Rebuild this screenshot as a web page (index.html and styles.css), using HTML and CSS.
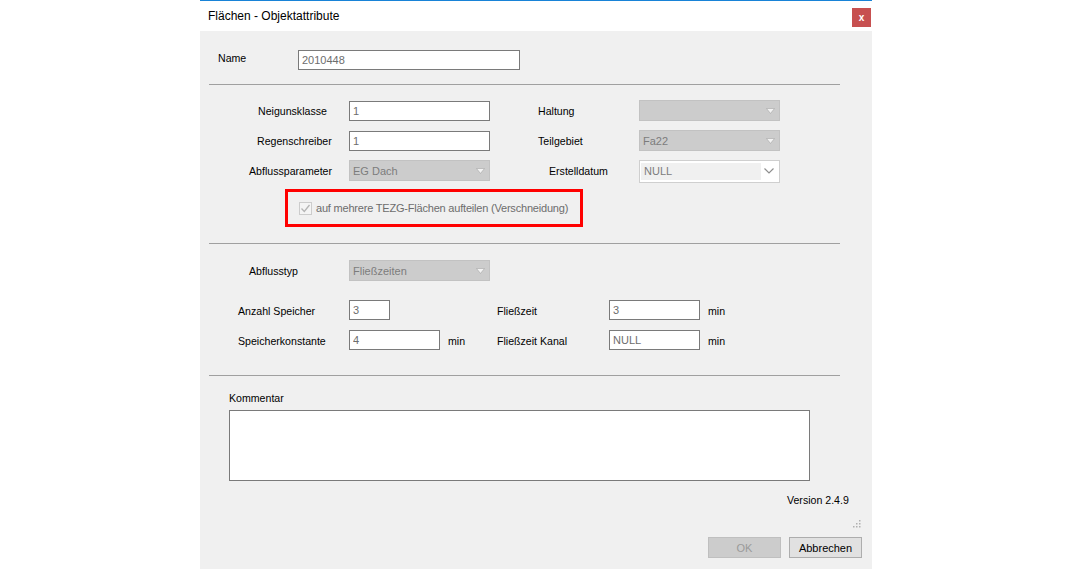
FILE: index.html
```html
<!DOCTYPE html>
<html lang="de">
<head>
<meta charset="utf-8">
<title>Flächen - Objektattribute</title>
<link rel="stylesheet" href="styles.css">
</head>
<body>
<div class="dialog">
  <div class="titlebar">
    <span class="title">Flächen - Objektattribute</span>
    <button class="close" type="button">x</button>
  </div>
  <div class="content">
    <div class="row row-name">
      <span class="lbl lbl-name">Name</span>
      <input class="field w222" type="text" value="2010448" readonly>
    </div>
    <div class="sep sep1"></div>

    <div class="row row-a1">
      <span class="lbl c1" style="padding-left:58px">Neigunsklasse</span>
      <input class="field w141" type="text" value="1" readonly>
      <span class="lbl c3" style="padding-left:48px">Haltung</span>
      <div class="combo w141"><span class="ctext"></span><svg class="carrow" width="9" height="6" viewBox="0 0 9 6"><path d="M0.5 0.5 L8.5 0.5 L4.5 5.5 Z"/></svg></div>
    </div>
    <div class="row row-a2">
      <span class="lbl c1" style="padding-left:57px">Regenschreiber</span>
      <input class="field w141" type="text" value="1" readonly>
      <span class="lbl c3" style="padding-left:48px">Teilgebiet</span>
      <div class="combo w141"><span class="ctext">Fa22</span><svg class="carrow" width="9" height="6" viewBox="0 0 9 6"><path d="M0.5 0.5 L8.5 0.5 L4.5 5.5 Z"/></svg></div>
    </div>
    <div class="row row-a3">
      <span class="lbl c1" style="padding-left:49px">Abflussparameter</span>
      <div class="combo w141"><span class="ctext">EG Dach</span><svg class="carrow" width="9" height="6" viewBox="0 0 9 6"><path d="M0.5 0.5 L8.5 0.5 L4.5 5.5 Z"/></svg></div>
      <span class="lbl c3" style="padding-left:59px">Erstelldatum</span>
      <div class="datepick">
        <span class="dtext">NULL</span>
        <svg class="chev" width="10" height="6" viewBox="0 0 10 6"><path d="M0.5 0.5 L5 5 L9.5 0.5" fill="none" stroke="#8f8f8f" stroke-width="1.2"/></svg>
      </div>
    </div>

    <div class="redbox">
      <span class="chk"><svg width="11" height="11" viewBox="0 0 11 11"><path d="M1.5 5.5 L4.3 8.5 L9.5 2" fill="none" stroke="#b4b4b4" stroke-width="1.3"/></svg></span>
      <span class="chklbl">auf mehrere TEZG-Flächen aufteilen (Verschneidung)</span>
    </div>
    <div class="sep sep2"></div>

    <div class="row row-b1">
      <span class="lbl c1" style="padding-left:49px">Abflusstyp</span>
      <div class="combo w141"><span class="ctext">Fließzeiten</span><svg class="carrow" width="9" height="6" viewBox="0 0 9 6"><path d="M0.5 0.5 L8.5 0.5 L4.5 5.5 Z"/></svg></div>
    </div>
    <div class="row row-b2">
      <span class="lbl c1" style="padding-left:38px">Anzahl Speicher</span>
      <input class="field w41" type="text" value="3" readonly>
      <span class="gap2"></span>
      <span class="lbl c5">Fließzeit</span>
      <input class="field w91" type="text" value="3" readonly>
      <span class="unit">min</span>
    </div>
    <div class="row row-b3">
      <span class="lbl c1" style="padding-left:38px">Speicherkonstante</span>
      <input class="field w91" type="text" value="4" readonly>
      <span class="unit u1">min</span>
      <span class="lbl c5">Fließzeit Kanal</span>
      <input class="field w91" type="text" value="NULL" readonly>
      <span class="unit">min</span>
    </div>
    <div class="sep sep3"></div>

    <div class="komm-lbl">Kommentar</div>
    <textarea class="komm"></textarea>

    <div class="version">Version 2.4.9</div>
    <div class="griprow">
      <svg class="grip" width="9" height="8" viewBox="0 0 9 8">
        <rect x="7" y="0" width="1.5" height="1.5" fill="#b0b0b0"/>
        <rect x="4" y="3" width="1.5" height="1.5" fill="#b0b0b0"/>
        <rect x="7" y="3" width="1.5" height="1.5" fill="#b0b0b0"/>
        <rect x="1" y="6" width="1.5" height="1.5" fill="#b0b0b0"/>
        <rect x="4" y="6" width="1.5" height="1.5" fill="#b0b0b0"/>
        <rect x="7" y="6" width="1.5" height="1.5" fill="#b0b0b0"/>
      </svg>
    </div>
    <div class="buttons">
      <button class="btn btn-ok" type="button" disabled>OK</button>
      <button class="btn btn-cancel" type="button">Abbrechen</button>
    </div>
  </div>
</div>
</body>
</html>
```

FILE: styles.css
```css
* { box-sizing: border-box; }
html, body { margin: 0; padding: 0; background: #ffffff; }
body {
  font-family: "Liberation Sans", Arial, sans-serif;
  font-size: 11px;
  color: #000;
  width: 1072px;
  height: 569px;
  overflow: hidden;
}
.dialog {
  width: 672px;
  height: 569px;
  margin-left: 200px;
  background: #f0f0f0;
  display: flex;
  flex-direction: column;
}
.titlebar {
  height: 31px;
  border-top: 1px solid #1883d7;
  background: #ffffff;
  display: flex;
  align-items: flex-start;
  padding-left: 8px;
}
.title {
  font-size: 12px;
  line-height: 14px;
  margin-top: 8px;
  color: #000;
}
.close {
  margin-left: auto;
  margin-top: 7px;
  margin-right: 1px;
  width: 19px;
  height: 19px;
  border: 0;
  padding: 0;
  background: #c75050;
  color: #fff;
  font-family: "Liberation Sans", Arial, sans-serif;
  font-weight: bold;
  font-size: 10px;
  line-height: 17px;
  text-align: center;
}
.content {
  display: flex;
  flex-direction: column;
  flex: 1;
}
.row {
  display: flex;
  align-items: center;
  height: 21px;
}
.lbl {
  display: block;
  white-space: nowrap;
  line-height: 13px;
  font-size: 10.6px;
  padding-top: 2px;
}
.c1 { width: 149px; }
.c3 { width: 149px; }
.row-name { margin-top: 19px; height: 20px; }
.lbl-name { width: 98px; padding-left: 18px; padding-top: 0; padding-bottom: 4px; }

.field {
  height: 20px;
  border: 1px solid #7a7a7a;
  background: #fff;
  color: #6d6d6d;
  font-family: "Liberation Sans", Arial, sans-serif;
  font-size: 11px;
  padding: 0 0 0 3px;
  margin: 0;
  outline: none;
}
.w222 { width: 222px; }
.w141 { width: 141px; }
.w41 { width: 41px; }
.w91 { width: 91px; }

.sep {
  margin-left: 9px;
  width: 631px;
  height: 1px;
  background: #a0a0a0;
}
.sep1 { margin-top: 14px; }
.row-a1 { margin-top: 15px; }
.row-a2 { margin-top: 9px; }
.row-a3 { margin-top: 9px; }

.combo {
  height: 21px;
  background: #cccccc;
  border: 1px solid #c2c2c2;
  display: flex;
  align-items: center;
  padding: 0 4px 0 3px;
}
.ctext {
  flex: 1;
  color: #7c7c7c;
  font-size: 11px;
}
.carrow path { fill: #f3f3f3; stroke: #a5a5a5; stroke-width: 0.6; }

.datepick {
  width: 141px;
  height: 23px;
  margin-top: 1px;
  border: 1px solid #cfcfcf;
  background: #fff;
  display: flex;
  align-items: center;
  padding: 0 5px 0 1px;
}
.dtext {
  width: 120px;
  height: 17px;
  background: #f0f0f0;
  color: #7c7c7c;
  line-height: 17px;
  padding-left: 3px;
}
.chev { margin-left: auto; }

.redbox {
  margin-top: 8px;
  margin-left: 85px;
  width: 298px;
  height: 38px;
  border: 3px solid #ff0000;
  display: flex;
  align-items: center;
  padding-left: 11px;
}
.chk {
  width: 13px;
  height: 13px;
  border: 1px solid #cccccc;
  background: #f4f4f4;
  display: flex;
  align-items: center;
  justify-content: center;
}
.chklbl {
  margin-left: 4px;
  color: #6d6d6d;
  font-size: 11px;
  letter-spacing: -0.2px;
  white-space: nowrap;
}
.sep2 { margin-top: 16px; }
.row-b1 { margin-top: 16px; }
.row-b2 { margin-top: 19px; height: 20px; }
.row-b3 { margin-top: 10px; height: 20px; }
.gap2 { width: 107px; }
.c5 { width: 112px; }
.unit { margin-left: 8px; line-height: 13px; font-size: 10.6px; padding-top: 2px; }
.u1 { width: 49px; }
.sep3 { margin-top: 25px; }

.komm-lbl {
  margin-top: 16px;
  margin-left: 29px;
  line-height: 13px;
  font-size: 10.6px;
}
.komm {
  display: block;
  margin-top: 5px;
  margin-left: 29px;
  width: 581px;
  height: 71px;
  border: 1px solid #7a7a7a;
  background: #fff;
  resize: none;
  padding: 0;
  outline: none;
}
.version {
  margin-top: 12px;
  margin-left: 587px;
  line-height: 13px;
  font-size: 10.6px;
  padding-top: 1px;
}
.griprow {
  margin-top: 13px;
  padding-left: 652px;
  height: 8px;
  display: flex;
}
.buttons {
  margin-top: 9px;
  display: flex;
  padding-left: 508px;
  gap: 8px;
}
.btn {
  width: 73px;
  height: 21px;
  font-family: "Liberation Sans", Arial, sans-serif;
  font-size: 11px;
  padding: 0;
  margin: 0;
}
.btn-ok {
  background: #cccccc;
  border: 1px solid #bfbfbf;
  color: #9a9a9a;
}
.btn-cancel {
  background: #e1e1e1;
  border: 1px solid #adadad;
  color: #000;
}
```
